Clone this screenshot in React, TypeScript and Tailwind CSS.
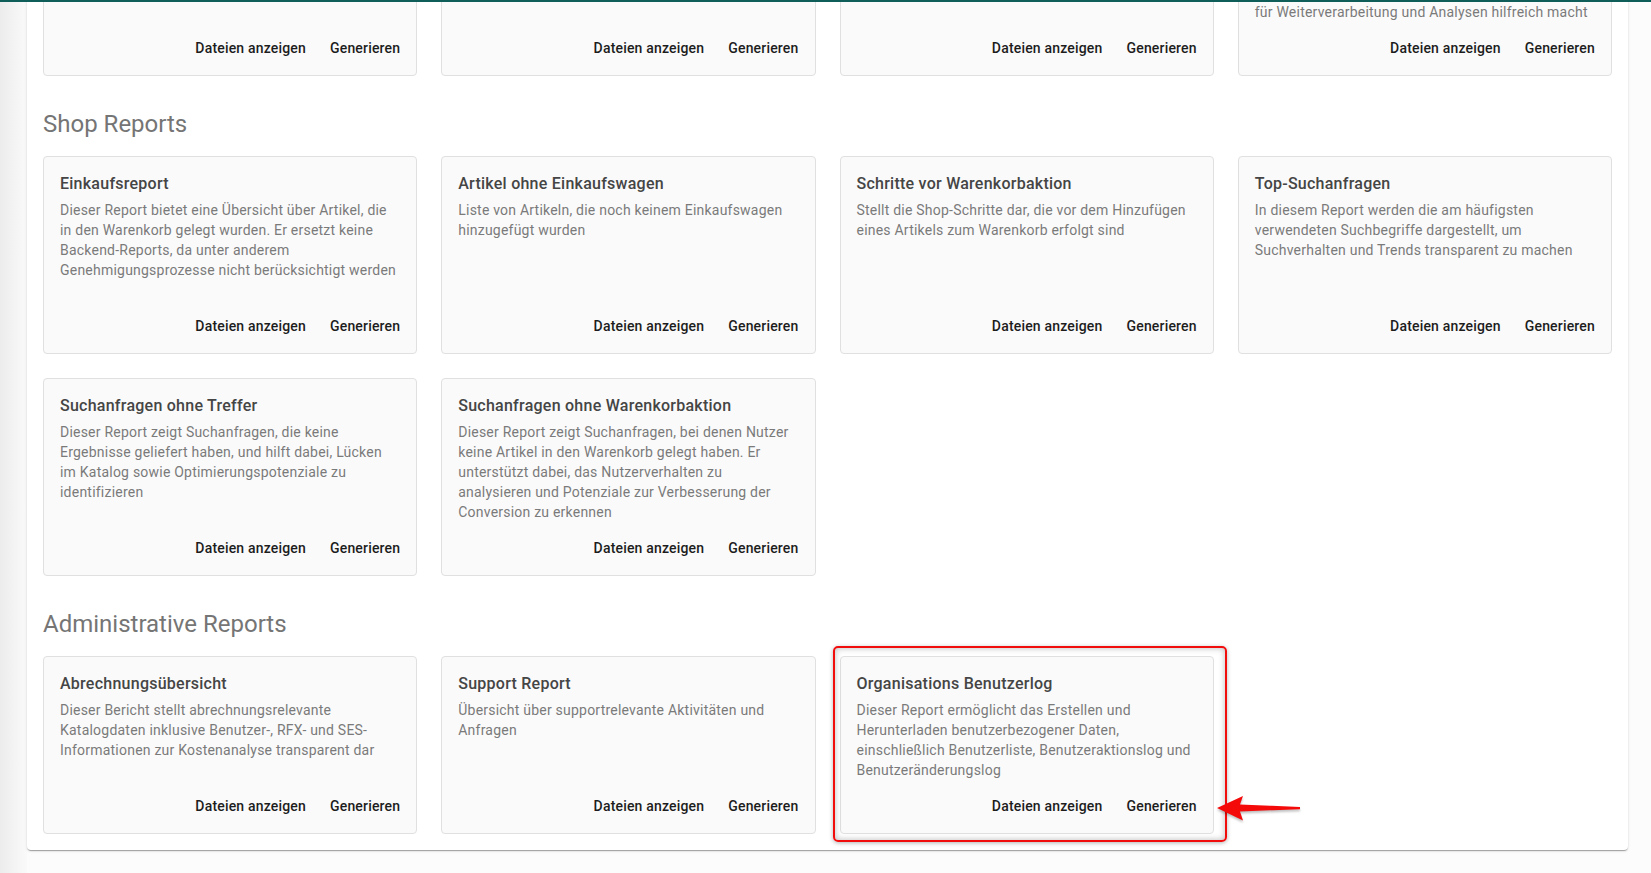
import type { ReactNode } from "react";

type Report = {
  title: string;
  description: ReactNode;
  highlighted?: boolean;
};

const katalogReports: Report[] = [
  {
    title: "Katalogübersicht",
    description: "Übersicht über alle aktiven Kataloge und deren Artikelanzahl",
  },
  {
    title: "Preisänderungen",
    description: "Zeigt alle Preisänderungen im ausgewählten Zeitraum",
  },
  {
    title: "Artikelstammdaten",
    description: "Listet die Stammdaten aller Artikel im Katalog auf",
  },
  {
    title: "Katalogexport",
    description: (
      <>
        Dieser Report exportiert Katalogdaten in einem
        <br />
        strukturierten Format, was ihn
        <br />
        für Weiterverarbeitung und Analysen hilfreich macht
      </>
    ),
  },
];

const shopReports: Report[] = [
  {
    title: "Einkaufsreport",
    description:
      "Dieser Report bietet eine Übersicht über Artikel, die in den Warenkorb gelegt wurden. Er ersetzt keine Backend-Reports, da unter anderem Genehmigungsprozesse nicht berücksichtigt werden",
  },
  {
    title: "Artikel ohne Einkaufswagen",
    description: "Liste von Artikeln, die noch keinem Einkaufswagen hinzugefügt wurden",
  },
  {
    title: "Schritte vor Warenkorbaktion",
    description: "Stellt die Shop-Schritte dar, die vor dem Hinzufügen eines Artikels zum Warenkorb erfolgt sind",
  },
  {
    title: "Top-Suchanfragen",
    description:
      "In diesem Report werden die am häufigsten verwendeten Suchbegriffe dargestellt, um Suchverhalten und Trends transparent zu machen",
  },
  {
    title: "Suchanfragen ohne Treffer",
    description:
      "Dieser Report zeigt Suchanfragen, die keine Ergebnisse geliefert haben, und hilft dabei, Lücken im Katalog sowie Optimierungspotenziale zu identifizieren",
  },
  {
    title: "Suchanfragen ohne Warenkorbaktion",
    description:
      "Dieser Report zeigt Suchanfragen, bei denen Nutzer keine Artikel in den Warenkorb gelegt haben. Er unterstützt dabei, das Nutzerverhalten zu analysieren und Potenziale zur Verbesserung der Conversion zu erkennen",
  },
];

const adminReports: Report[] = [
  {
    title: "Abrechnungsübersicht",
    description:
      "Dieser Bericht stellt abrechnungsrelevante Katalogdaten inklusive Benutzer-, RFX- und SES-Informationen zur Kostenanalyse transparent dar",
  },
  {
    title: "Support Report",
    description: "Übersicht über supportrelevante Aktivitäten und Anfragen",
  },
  {
    title: "Organisations Benutzerlog",
    description:
      "Dieser Report ermöglicht das Erstellen und Herunterladen benutzerbezogener Daten, einschließlich Benutzerliste, Benutzeraktionslog und Benutzeränderungslog",
    highlighted: true,
  },
];

const ActionButton = ({ label }: { label: string }) => (
  <button className="rounded px-2 py-1.5 text-[14px] leading-[24.5px] font-medium tracking-[0.18px] text-[#1d1d1d] hover:bg-black/5">
    {label}
  </button>
);

const ReportCard = ({ report }: { report: Report }) => {
  return (
    <div className="relative flex">
      <div className="flex flex-1 flex-col rounded-[4px] border border-[#e0e0e0] bg-[#fafafa]">
        <div className="flex-1 px-4 pt-4">
          <div className="mb-[6.5px] text-[16px] leading-[21px] font-medium tracking-[0.25px] text-[#454545]">
            {report.title}
          </div>
          <div className="text-[14px] leading-5 tracking-[0.22px] text-[#7a7a7a]">{report.description}</div>
        </div>
        <div className="flex justify-end gap-2 p-2">
          <ActionButton label="Dateien anzeigen" />
          <ActionButton label="Generieren" />
        </div>
      </div>
      {report.highlighted && (
        <>
          <div className="pointer-events-none absolute -top-[10px] -right-[13px] -bottom-[8px] -left-[7px] rounded-[5px] border-2 border-[#f20d0d] shadow-[0_1px_4px_rgba(0,0,0,0.3),inset_0_0_6px_rgba(0,0,0,0.28)]" />
          <svg
            className="pointer-events-none absolute top-[136px] left-[calc(100%-3px)] h-[32px] w-[94px] drop-shadow-[0_2px_1px_rgba(0,0,0,0.25)]"
            viewBox="0 0 94 32"
          >
            <path d="M6 16 L32 4 L29 12.5 L89 15 L89 17.2 L29 19.5 L32 28.5 Z" fill="#f50a0a" />
          </svg>
        </>
      )}
    </div>
  );
};

const ReportSection = ({ title, reports, first }: { title: string; reports: Report[]; first?: boolean }) => (
  <section>
    <h2 className={`${first ? "mt-0" : "mt-8"} mb-4 text-[24px] leading-8 font-normal text-[#757575]`}>{title}</h2>
    <div className="grid auto-rows-fr grid-cols-4 gap-6">
      {reports.map((report) => (
        <ReportCard key={report.title} report={report} />
      ))}
    </div>
  </section>
);

export default function App() {
  return (
    <div className="h-[873px] w-[1651px] overflow-hidden bg-[#fcfcfc] font-['Roboto',sans-serif]">
      <div className="h-[2px] bg-[#105e59]" />
      <div className="flex h-[871px] overflow-hidden">
        <div className="w-[27px] shrink-0 bg-linear-to-r from-[#ececec] to-[#fafafa]" />
        <div className="-mt-[148.5px] w-[1601px] shrink-0 self-start rounded-b-[4px] bg-white px-4 pt-4 pb-4 shadow-[0_2px_1px_-1px_rgba(0,0,0,0.2),0_1px_1px_0_rgba(0,0,0,0.14),0_1px_3px_0_rgba(0,0,0,0.12)]">
          <ReportSection title="Katalog Reports" reports={katalogReports} first />
          <ReportSection title="Shop Reports" reports={shopReports} />
          <ReportSection title="Administrative Reports" reports={adminReports} />
        </div>
        <div className="flex-1" />
      </div>
    </div>
  );
}
